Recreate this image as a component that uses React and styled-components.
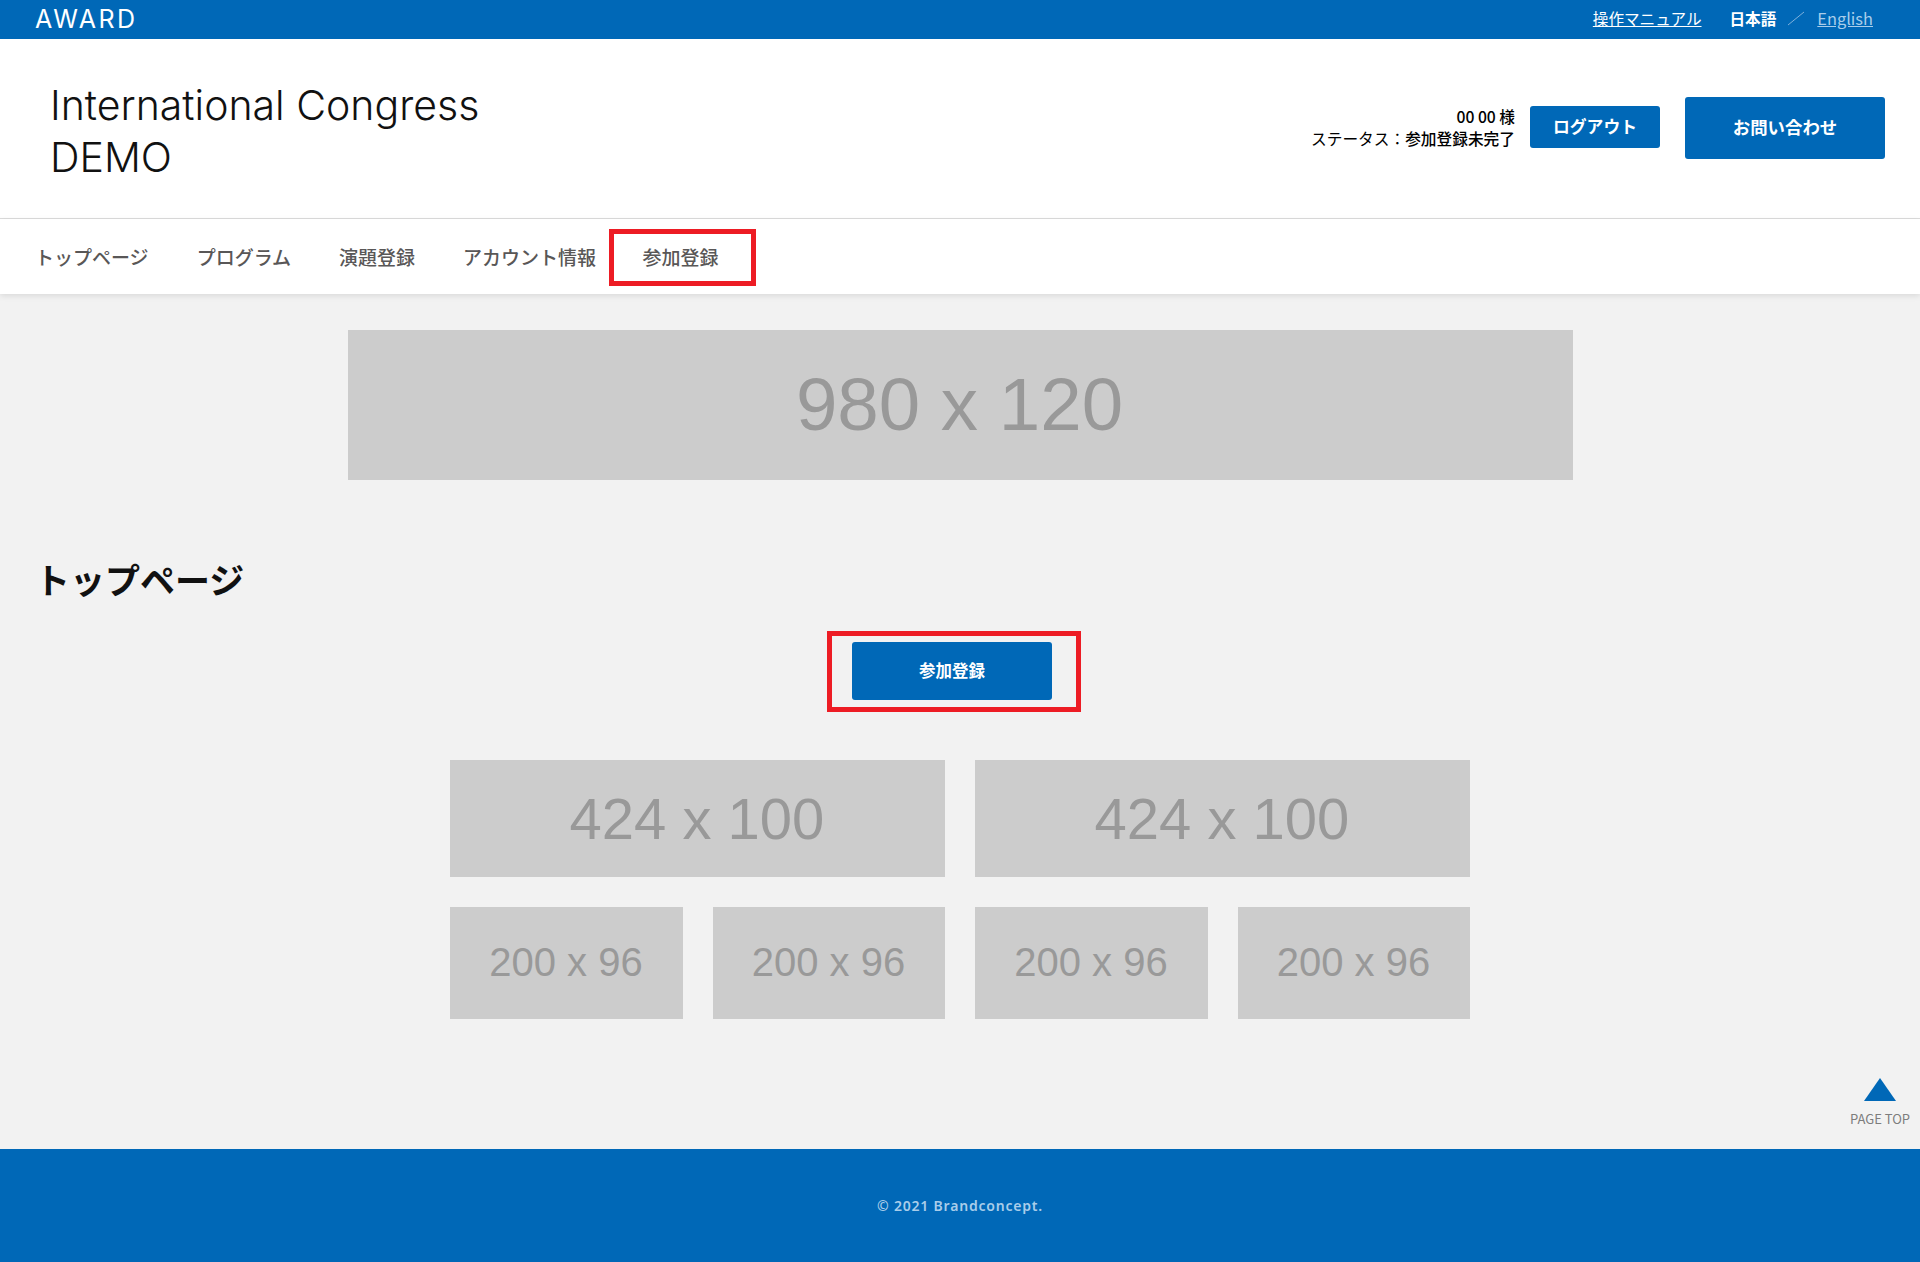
import React from 'react';
import styled, { createGlobalStyle } from 'styled-components';

const blue = '#0068b7';
const jp = '"Noto Sans CJK JP", "Noto Sans", sans-serif';

const GlobalStyle = createGlobalStyle`
    * { box-sizing: border-box; }
    html, body { margin: 0; padding: 0; }
    body { background: #f2f2f2; font-family: ${jp}; color: #000; }
    a { color: inherit; }
`;

const Page = styled.div`
    min-height: 1262px;
    display: flex;
    flex-direction: column;
`;

const TopBar = styled.div`
    height: 39px;
    background: ${blue};
    display: flex;
    align-items: center;
    justify-content: space-between;
    padding: 0 47px 0 35px;
`;
const Logo = styled.div`
    font-family: "Inter", sans-serif;
    font-size: 25px;
    font-weight: 400;
    letter-spacing: 2.4px;
    line-height: 39px;
    color: #fff;
`;
const TopLinks = styled.div`
    display: flex;
    align-items: center;
    font-size: 15.6px;
    color: #fff;
    padding-bottom: 3px;
`;
const ManualLink = styled.a`
    color: #fff;
    text-decoration: underline;
    margin-right: 28px;
`;
const LangCurrent = styled.span`
    font-weight: 700;
`;
const LangSlash = styled.svg`
    width: 18px;
    height: 16px;
    margin: 0 12px 0 11px;
`;
const LangLink = styled.a`
    color: #a9cdea;
    font-size: 16.4px;
    text-decoration: underline;
`;

const Header = styled.header`
    height: 180px;
    background: #fff;
    display: flex;
    align-items: center;
    justify-content: space-between;
    padding: 0 35px 0 50px;
    border-bottom: 1px solid #dcdcdc;
`;
const Title = styled.h1`
    margin: 5px 0 0;
    font-family: "Inter", sans-serif;
    font-size: 41px;
    font-weight: 300;
    line-height: 52px;
    color: #111;
`;
const HeaderRight = styled.div`
    display: flex;
    align-items: center;
    margin-bottom: 2px;
`;
const UserInfo = styled.div`
    font-size: 15.7px;
    line-height: 22px;
    text-align: right;
    margin: 0 15px 0 0;
    font-weight: 500;
`;
const StatusLabel = styled.span`
    font-weight: 400;
`;
const Button = styled.a`
    display: flex;
    align-items: center;
    justify-content: center;
    width: ${p => p.$w}px;
    height: ${p => p.$h}px;
    background: ${blue};
    color: #fff;
    border-radius: 3px;
    font-size: ${p => p.$size}px;
    font-weight: 700;
    padding-bottom: 2px;
    margin-left: ${p => p.$ml || 0}px;
`;
const LogoutButton = styled(Button)`
    margin-bottom: 1px;
`;

const Nav = styled.nav`
    height: 75px;
    background: #fff;
    display: flex;
    align-items: center;
    padding-left: 35px;
    box-shadow: 0 2px 6px rgba(0, 0, 0, 0.1);
    position: relative;
`;
const NavItem = styled.a`
    font-size: 19px;
    font-weight: 500;
    color: #595757;
    margin-right: 48px;
`;
const NavItemMarked = styled(NavItem)`
    margin: 2px 0 0 -35px;
    width: 147px;
    height: 57px;
    display: flex;
    align-items: center;
    justify-content: center;
    border: 5px solid #ed1c24;
    padding: 0 4px 3px 0;
`;

const Main = styled.main`
    flex: 1;
    display: flex;
    flex-direction: column;
    padding-top: 36px;
    position: relative;
`;
const Placeholder = styled.div`
    display: flex;
    align-items: center;
    justify-content: center;
    width: ${p => p.$w}px;
    height: ${p => p.$h}px;
    padding: 0 1px 1px 0;
    background: #cccccc;
    color: #999;
    font-family: "Liberation Sans", Arial, sans-serif;
    font-size: ${p => p.$size}px;
`;
const BannerRow = styled.div`
    display: flex;
    justify-content: center;
`;
const Heading = styled.h2`
    margin: 74px 0 0 35px;
    font-size: 35px;
    font-weight: 700;
    line-height: 50px;
    color: #111;
`;
const CtaBox = styled.div`
    align-self: flex-start;
    margin: 27px 0 0 827px;
    width: 254px;
    height: 81px;
    border: 5px solid #ed1c24;
    display: flex;
    align-items: center;
    padding: 0 0 2px 20px;
`;
const Grid = styled.div`
    display: flex;
    flex-direction: column;
    gap: 30px;
    width: 1020px;
    margin: 48px 0 0 450px;
`;
const GridRow = styled.div`
    display: flex;
    justify-content: space-between;
`;
const PageTop = styled.a`
    position: absolute;
    right: 10px;
    bottom: 21px;
    width: 60px;
    display: flex;
    flex-direction: column;
    align-items: center;
    font-size: 13px;
    line-height: 18px;
    white-space: nowrap;
    color: #7d7d7d;
`;
const PageTopArrow = styled.svg`
    width: 32px;
    height: 23px;
    margin-bottom: 9px;
`;

const Footer = styled.footer`
    height: 113px;
    background: ${blue};
    display: flex;
    align-items: center;
    justify-content: center;
    color: #a9cdea;
    font-family: "Noto Sans", sans-serif;
    font-size: 14px;
    font-weight: 600;
    letter-spacing: 0.8px;
`;

const App = () => {
    return (
        <Page>
            <GlobalStyle />
            <TopBar>
                <Logo>AWARD</Logo>
                <TopLinks>
                    <ManualLink>操作マニュアル</ManualLink>
                    <LangCurrent>日本語</LangCurrent>
                    <LangSlash viewBox="0 0 18 16">
                        <line x1="1" y1="15" x2="17" y2="2" stroke="#7fb1dc" strokeWidth="1" />
                    </LangSlash>
                    <LangLink>English</LangLink>
                </TopLinks>
            </TopBar>
            <Header>
                <Title>International Congress<br />DEMO</Title>
                <HeaderRight>
                    <UserInfo>
                        00 00 様<br />
                        <StatusLabel>ステータス：</StatusLabel>参加登録未完了
                    </UserInfo>
                    <LogoutButton $w={130} $h={42} $size={16.8}>ログアウト</LogoutButton>
                    <Button $w={200} $h={62} $size={17.4} $ml={25}>お問い合わせ</Button>
                </HeaderRight>
            </Header>
            <Nav>
                <NavItem>トップページ</NavItem>
                <NavItem>プログラム</NavItem>
                <NavItem>演題登録</NavItem>
                <NavItem>アカウント情報</NavItem>
                <NavItemMarked>参加登録</NavItemMarked>
            </Nav>
            <Main>
                <BannerRow>
                    <Placeholder $w={1225} $h={150} $size={74.5}>980 x 120</Placeholder>
                </BannerRow>
                <Heading>トップページ</Heading>
                <CtaBox>
                    <Button $w={200} $h={58} $size={16.5}>参加登録</Button>
                </CtaBox>
                <Grid>
                    <GridRow>
                        <Placeholder $w={495} $h={117} $size={58}>424 x 100</Placeholder>
                        <Placeholder $w={495} $h={117} $size={58}>424 x 100</Placeholder>
                    </GridRow>
                    <GridRow>
                        <Placeholder $w={233} $h={112} $size={40}>200 x 96</Placeholder>
                        <Placeholder $w={232} $h={112} $size={40}>200 x 96</Placeholder>
                        <Placeholder $w={233} $h={112} $size={40}>200 x 96</Placeholder>
                        <Placeholder $w={232} $h={112} $size={40}>200 x 96</Placeholder>
                    </GridRow>
                </Grid>
                <PageTop>
                    <PageTopArrow viewBox="0 0 32 23">
                        <polygon points="16,0 32,23 0,23" fill={blue} />
                    </PageTopArrow>
                    PAGE TOP
                </PageTop>
            </Main>
            <Footer>© 2021 Brandconcept.</Footer>
        </Page>
    );
};

export default App;
